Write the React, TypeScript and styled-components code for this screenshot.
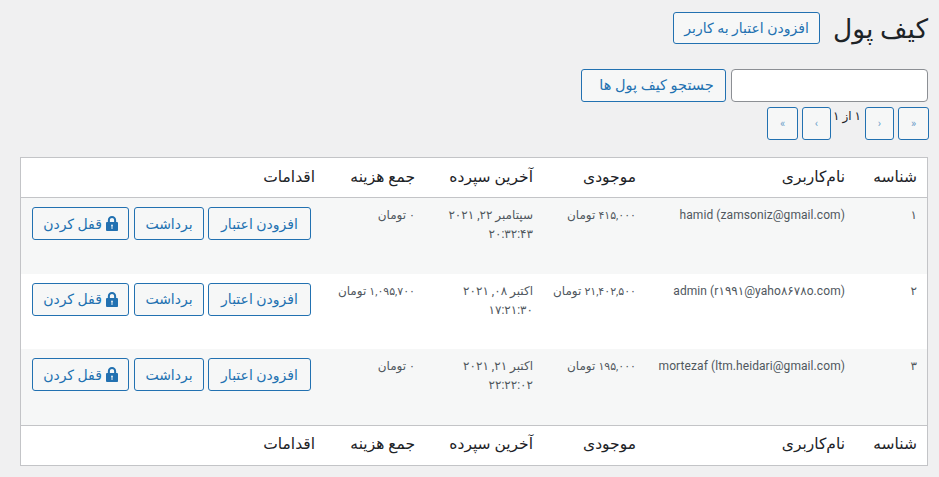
import React from 'react'
import styled, { createGlobalStyle } from 'styled-components'

const GlobalStyle = createGlobalStyle`
  html, body {
    margin: 0;
    padding: 0;
    background: #f0f0f1;
    font-family: Roboto, "DejaVu Sans", sans-serif;
    font-size: 13px;
    color: #3c434a;
  }
`

const Wrap = styled.div`
  direction: rtl;
  padding: 12px 11px 0 11px;
  height: 465px;
  overflow: hidden;
`

const TitleRow = styled.div`
  display: flex;
  align-items: flex-start;
  gap: 13px;
  height: 57px;
`

const Title = styled.h1`
  margin: 0;
  font-size: 26.5px;
  line-height: 34px;
  font-weight: 400;
  color: #1d2327;
`

const Button = styled.button<{ $w?: number; $h?: number }>`
  box-sizing: border-box;
  display: inline-flex;
  align-items: center;
  justify-content: center;
  gap: 4px;
  width: ${p => (p.$w ? `${p.$w}px` : 'auto')};
  height: ${p => p.$h || 33}px;
  padding: 0;
  border: 1px solid #2271b1;
  border-radius: 3px;
  background: #f6f7f7;
  color: #2271b1;
  font-family: inherit;
  font-size: 14px;
  white-space: nowrap;
`

const SearchButton = styled(Button)`
  padding-left: 6px;
  font-size: 14.5px;
`

const LockButton = styled(Button)`
  margin-right: 1px;
`

const SearchRow = styled.div`
  display: flex;
  gap: 5px;
  height: 33px;
`

const SearchInput = styled.input`
  box-sizing: border-box;
  width: 197px;
  height: 33px;
  border: 1px solid #8c8f94;
  border-radius: 4px;
  background: #fff;
`

const Pager = styled.div`
  display: flex;
  gap: 4px;
  height: 33px;
  margin: 5px -1px 17px 0;
`

const PagerText = styled.span`
  width: 26px;
  padding-top: 1px;
  line-height: 16px;
  text-align: center;
  white-space: nowrap;
  color: #1d2327;
  font-size: 12px;
`

const PagerArrow = styled.span`
  font-size: 11px;
  direction: ltr;
  opacity: 0.65;
`

const Table = styled.table`
  box-sizing: border-box;
  width: 908px;
  table-layout: fixed;
  border-collapse: separate;
  border-spacing: 0;
  border: 1px solid #c3c4c7;
  background: #fff;
`

const HeadCell = styled.th<{ $w?: number }>`
  width: ${p => (p.$w ? `${p.$w}px` : 'auto')};
  box-sizing: border-box;
  height: 40px;
  padding: 0 10px 2px;
  text-align: right;
  font-weight: 400;
  font-size: 15.5px;
  color: #1d2327;
  border-bottom: 1px solid #c3c4c7;
`

const FootCell = styled(HeadCell)`
  border-bottom: 0;
  border-top: 1px solid #c3c4c7;
`

const Row = styled.tr<{ $odd: boolean }>`
  background: ${p => (p.$odd ? '#f6f7f7' : '#fff')};
`

const Cell = styled.td`
  box-sizing: border-box;
  height: 75.67px;
  padding: 8px 10px;
  vertical-align: top;
  font-size: 12px;
  line-height: 19px;
  color: #50575e;
  white-space: nowrap;
`

const UserText = styled.span`
  display: inline-block;
  direction: ltr;
  letter-spacing: 0.08px;
`

const Num = styled.span`
  font-size: 11px;
`

const Actions = styled.div`
  display: flex;
  gap: 4px;
  margin-right: 4px;
  margin-top: 1px;
`

const LockIcon = () => (
  <svg width="12" height="15" viewBox="0 0 13 15" preserveAspectRatio="none" fill="#2271b1">
    <path d="M2 6V4.2C2 1.8 3.9 0 6.5 0S11 1.8 11 4.2V6h1c.6 0 1 .4 1 1v7c0 .6-.4 1-1 1H1c-.6 0-1-.4-1-1V7c0-.6.4-1 1-1h1zm2.2 0h4.6V4.2c0-1.3-1-2.2-2.3-2.2S4.2 2.9 4.2 4.2V6zM5.5 9.5c0 .4.2.7.5.9V13h1v-2.6c.3-.2.5-.5.5-.9 0-.6-.4-1-1-1s-1 .4-1 1z" fillRule="evenodd" />
  </svg>
)

const rows = [
  { id: '۱', user: 'hamid (zamsoniz@gmail.com)', balance: '۴۱۵,۰۰۰', date: 'سپتامبر ۲۲, ۲۰۲۱', time: '۲۰:۳۲:۴۳', total: '۰' },
  { id: '۲', user: 'admin (r۱۹۹۱@yaho۸۶۷۸o.com)', balance: '۲۱,۴۰۲,۵۰۰', date: 'اکتبر ۰۸, ۲۰۲۱', time: '۱۷:۲۱:۳۰', total: '۱,۰۹۵,۷۰۰' },
  { id: '۳', user: 'mortezaf (ltm.heidari@gmail.com)', balance: '۱۹۵,۰۰۰', date: 'اکتبر ۲۱, ۲۰۲۱', time: '۲۲:۲۲:۰۲', total: '۰' },
]

const columns = [
  { label: 'شناسه', w: 72 },
  { label: 'نام‌کاربری', w: 209 },
  { label: 'موجودی', w: 103 },
  { label: 'آخرین سپرده', w: 118 },
  { label: 'جمع هزینه', w: 100 },
  { label: 'اقدامات' },
]

export default function App() {
  return (
    <Wrap>
      <GlobalStyle />
      <TitleRow>
        <Title>کیف پول</Title>
        <Button $w={147} $h={32}>افزودن اعتبار به کاربر</Button>
      </TitleRow>
      <SearchRow>
        <SearchInput />
        <SearchButton $w={145}>جستجو کیف پول ها</SearchButton>
      </SearchRow>
      <Pager>
        <Button $w={31}><PagerArrow>»</PagerArrow></Button>
        <Button $w={29}><PagerArrow>›</PagerArrow></Button>
        <PagerText>۱ از ۱</PagerText>
        <Button $w={29}><PagerArrow>‹</PagerArrow></Button>
        <Button $w={31}><PagerArrow>«</PagerArrow></Button>
      </Pager>
      <Table>
        <thead>
          <tr>
            {columns.map(c => <HeadCell key={c.label} $w={c.w}>{c.label}</HeadCell>)}
          </tr>
        </thead>
        <tbody>
          {rows.map((r, i) => (
            <Row key={r.id} $odd={i % 2 === 0}>
              <Cell>{r.id}</Cell>
              <Cell><UserText>{r.user}</UserText></Cell>
              <Cell><Num>{r.balance}</Num> تومان</Cell>
              <Cell>{r.date}<br />{r.time}</Cell>
              <Cell><Num>{r.total}</Num> تومان</Cell>
              <Cell>
                <Actions>
                  <Button $w={103}>افزودن اعتبار</Button>
                  <Button $w={70}>برداشت</Button>
                  <LockButton $w={97}><LockIcon />قفل کردن</LockButton>
                </Actions>
              </Cell>
            </Row>
          ))}
        </tbody>
        <tfoot>
          <tr>
            {columns.map(c => <FootCell key={c.label}>{c.label}</FootCell>)}
          </tr>
        </tfoot>
      </Table>
    </Wrap>
  )
}
